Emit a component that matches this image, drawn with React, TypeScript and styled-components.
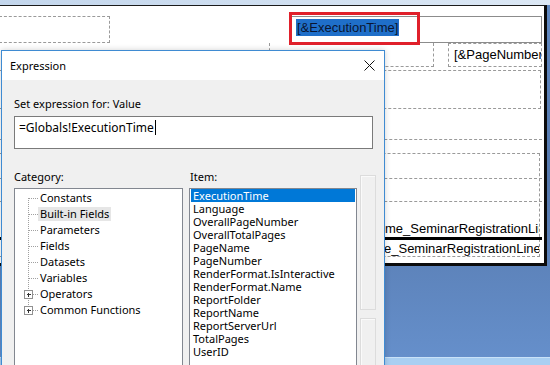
import React from "react";
import styled, { createGlobalStyle } from "styled-components";

const GlobalStyle = createGlobalStyle`
  html, body {
    margin: 0;
    padding: 0;
  }
  body {
    width: 550px;
    height: 365px;
    overflow: hidden;
  }
`;

const UI_FONT = `"Segoe UI", "Noto Sans", sans-serif`;

const Screen = styled.div`
  position: relative;
  width: 550px;
  height: 365px;
  overflow: hidden;
  display: flex;
  flex-direction: column;
  background: linear-gradient(180deg, #6189c1 0%, #5679ad 50%, #6690cc 100%);
  font-family: ${UI_FONT};
`;

const TopBand = styled.div`
  height: 5px;
  flex-shrink: 0;
  background: linear-gradient(90deg, #c3d6ec, #dce8f5);
`;

const Page = styled.div`
  position: relative;
  box-sizing: content-box;
  width: 544px;
  height: 257px;
  flex-shrink: 0;
  background: #fff;
  border-top: 1px solid #1b1b1b;
  border-right: 3px solid #0b0b0b;
  border-bottom: 3px solid #0b0b0b;
  overflow: hidden;
  font-family: "Liberation Sans", Arial, sans-serif;
  font-size: 13px;
  color: #000;
`;

const Filler = styled.div`
  flex: 1;
`;

const BottomBand = styled.div`
  height: 7px;
  flex-shrink: 0;
  background: #a9cff2;
  border-top: 1px solid #c9e2f8;
`;

/* report items on the design surface */
const Item = styled.div<{ $x: number; $y: number; $w: number; $h: number; $solid?: boolean; $openTop?: boolean }>`
  position: absolute;
  box-sizing: border-box;
  left: ${(p) => p.$x}px;
  top: ${(p) => p.$y}px;
  width: ${(p) => p.$w}px;
  height: ${(p) => p.$h}px;
  border: 1px ${(p) => (p.$solid ? "solid #8c8c8c" : "dashed #9a9a9a")};
  border-top-width: ${(p) => (p.$openTop ? 0 : 1)}px;
  white-space: nowrap;
  overflow: hidden;
`;

const HLine = styled.div<{ $y: number; $thick?: boolean }>`
  position: absolute;
  left: 0;
  width: 542px;
  top: ${(p) => p.$y}px;
  border-top: ${(p) => (p.$thick ? "3px solid #000" : "1px dashed #9a9a9a")};
`;

const FieldText = styled.span`
  display: inline-block;
  margin: 2px 0 0 5px;
  line-height: 17px;
  padding: 0 1px;
  background: #1f6fc9;
  color: #0a1530;
`;

const CellText = styled.div<{ $x: number; $y: number }>`
  position: absolute;
  left: ${(p) => p.$x}px;
  top: ${(p) => p.$y}px;
  line-height: 15px;
  white-space: nowrap;
`;

const Highlight = styled.div`
  position: absolute;
  left: 289px;
  top: 6px;
  width: 131px;
  height: 33px;
  box-sizing: border-box;
  border: 3px solid #e0202b;
`;

const ClipRight = styled.div`
  position: absolute;
  left: 0;
  top: 0;
  width: 539px;
  height: 257px;
  overflow: hidden;
`;

/* dialog */
const Dialog = styled.div`
  position: absolute;
  left: 1px;
  top: 50px;
  width: 384px;
  height: 330px;
  box-sizing: border-box;
  border: 1px solid #3f8bd2;
  background: #f0f0f0;
  display: flex;
  flex-direction: column;
  box-shadow: 0 0 6px rgba(0, 0, 0, 0.18);
  color: #000;
`;

const TitleBar = styled.div`
  height: 29px;
  flex-shrink: 0;
  background: #fff;
  display: flex;
  align-items: center;
  justify-content: space-between;
  padding: 0 9px 0 8px;
  font-size: 11px;
`;

const Body = styled.div`
  display: flex;
  flex-direction: column;
  padding: 16px 11px 0 12px;
  font-size: 11px;
`;

const Label = styled.div`
  line-height: 15px;
`;

const ExprBox = styled.div`
  margin-top: 5px;
  height: 33px;
  box-sizing: border-box;
  border: 1px solid #7a7a7a;
  background: #fff;
  padding: 2px 4px;
  font-size: 12px;
  line-height: 17px;
  display: flex;
  align-items: flex-start;
`;

const Caret = styled.span`
  display: inline-block;
  width: 1px;
  height: 15px;
  margin: 1px 0 0 1px;
  background: #000;
`;

const Columns = styled.div`
  display: grid;
  grid-template-columns: 169px 168px 13px;
  column-gap: 6px;
  margin-top: 20px;
`;

const ColLabel = styled.div<{ $indent?: number }>`
  line-height: 15px;
  padding-left: ${(p) => p.$indent ?? 0}px;
  margin-bottom: 4px;
`;

const ListBox = styled.div`
  height: 200px;
  box-sizing: border-box;
  border: 1px solid #828790;
  background: #fff;
  font-size: 11px;
`;

const TreeBody = styled.div`
  padding-top: 1px;
`;

const TreeRow = styled.div`
  display: flex;
  align-items: center;
  height: 16px;
`;

const TreeText = styled.span<{ $inactive?: boolean }>`
  line-height: 14px;
  padding: 0 2px;
  background: ${(p) => (p.$inactive ? "#e6e6e6" : "transparent")};
`;

const ItemRow = styled.div<{ $selected?: boolean }>`
  height: 13px;
  line-height: 13px;
  margin: 0 1px;
  padding-left: 2px;
  background: ${(p) => (p.$selected ? "#0078d7" : "transparent")};
  color: ${(p) => (p.$selected ? "#fff" : "#000")};
  white-space: nowrap;
`;

const DescColumn = styled.div`
  display: flex;
  flex-direction: column;
  gap: 8px;
  padding-top: 6px;
  margin-left: -3px;
`;

const DescBox = styled.div<{ $h: number }>`
  height: ${(p) => p.$h}px;
  box-sizing: border-box;
  border: 1px solid #dcdcdc;
  box-shadow: inset 1px 1px 0 #fafafa;
`;

type Node = { name: string; expandable?: boolean; inactive?: boolean };

const categories: Node[] = [
  { name: "Constants" },
  { name: "Built-in Fields", inactive: true },
  { name: "Parameters" },
  { name: "Fields" },
  { name: "Datasets" },
  { name: "Variables" },
  { name: "Operators", expandable: true },
  { name: "Common Functions", expandable: true },
];

const items = [
  "ExecutionTime",
  "Language",
  "OverallPageNumber",
  "OverallTotalPages",
  "PageName",
  "PageNumber",
  "RenderFormat.IsInteractive",
  "RenderFormat.Name",
  "ReportFolder",
  "ReportName",
  "ReportServerUrl",
  "TotalPages",
  "UserID",
];

const Connector = ({ first, last, plus }: { first: boolean; last: boolean; plus?: boolean }) => (
  <svg width="23" height="16" style={{ flexShrink: 0 }} shapeRendering="crispEdges">
    <line
      x1="13.5"
      y1={first ? 8 : 0}
      x2="13.5"
      y2={last ? 8 : 16}
      stroke="#a0a0a0"
      strokeDasharray="1 1"
    />
    <line x1={plus ? 18 : 14} y1="8.5" x2="23" y2="8.5" stroke="#a0a0a0" strokeDasharray="1 1" />
    {plus && (
      <g>
        <rect x="9.5" y="4.5" width="8" height="8" fill="#fff" stroke="#919191" />
        <line x1="11.5" y1="8.5" x2="16" y2="8.5" stroke="#333" />
        <line x1="13.5" y1="6.5" x2="13.5" y2="11" stroke="#333" />
      </g>
    )}
  </svg>
);

const CloseIcon = () => (
  <svg width="11" height="11" viewBox="0 0 11 11">
    <path d="M0.5 0.5 L10.5 10.5 M10.5 0.5 L0.5 10.5" stroke="#111" strokeWidth="1" />
  </svg>
);

export default function App() {
  return (
    <>
      <GlobalStyle />
      <Screen>
        <TopBand />
        <Page>
          <Item $x={-1} $y={10} $w={111} $h={27} />
          <Item $x={269} $y={37} $w={165} $h={24} $openTop />
          <Item $x={290} $y={10} $w={252} $h={27} $solid>
            <FieldText>[&amp;ExecutionTime]</FieldText>
          </Item>
          <Highlight />
          <Item $x={448} $y={37} $w={94} $h={24}>
            <CellText $x={5} $y={3}>[&amp;PageNumber]</CellText>
          </Item>
          <Item $x={-1} $y={64} $w={542} $h={39} />
          <HLine $y={133} />
          <Item $x={-1} $y={147} $w={541} $h={104} />
          <HLine $y={172} />
          <HLine $y={195} />
          <HLine $y={231} $thick />
          <ClipRight>
            <CellText $x={385} $y={215}>me_SeminarRegistrationLine</CellText>
            <CellText $x={384} $y={235}>e_SeminarRegistrationLine</CellText>
          </ClipRight>
        </Page>
        <Filler />
        <BottomBand />

        <Dialog>
          <TitleBar>
            <span>Expression</span>
            <CloseIcon />
          </TitleBar>
          <Body>
            <Label>Set expression for: Value</Label>
            <ExprBox>
              <span>=Globals!ExecutionTime</span>
              <Caret />
            </ExprBox>
            <Columns>
              <div>
                <ColLabel>Category:</ColLabel>
                <ListBox>
                  <TreeBody>
                    {categories.map((c, i) => (
                      <TreeRow key={c.name}>
                        <Connector first={i === 0} last={i === categories.length - 1} plus={c.expandable} />
                        <TreeText $inactive={c.inactive}>{c.name}</TreeText>
                      </TreeRow>
                    ))}
                  </TreeBody>
                </ListBox>
              </div>
              <div>
                <ColLabel $indent={1}>Item:</ColLabel>
                <ListBox>
                  {items.map((it, i) => (
                    <ItemRow key={it} $selected={i === 0}>
                      {it}
                    </ItemRow>
                  ))}
                </ListBox>
              </div>
              <DescColumn>
                <DescBox $h={135} />
                <DescBox $h={60} />
              </DescColumn>
            </Columns>
          </Body>
        </Dialog>
      </Screen>
    </>
  );
}
